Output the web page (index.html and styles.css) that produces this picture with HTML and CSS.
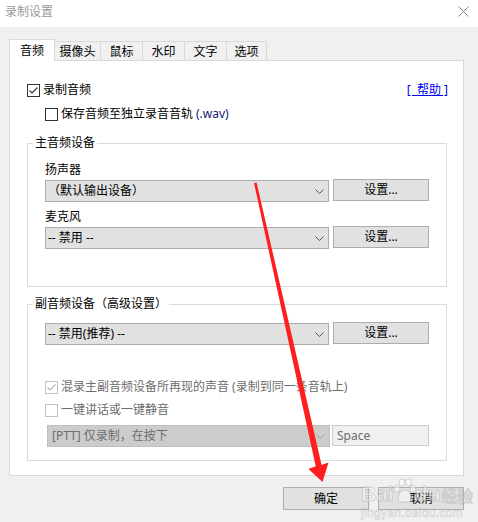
FILE: index.html
```html
<!DOCTYPE html>
<html lang="zh-CN">
<head>
<meta charset="utf-8">
<title>录制设置</title>
<link rel="stylesheet" href="styles.css">
</head>
<body>
<div class="titlebar">
  <span class="title">录制设置</span>
  <svg class="close" width="11" height="11" viewBox="0 0 11 11"><path d="M0.5 0.5 L10.5 10.5 M10.5 0.5 L0.5 10.5" stroke="#8a8a8a" stroke-width="1" fill="none"/></svg>
</div>
<div class="main">
  <div class="tabs">
    <div class="tab active w46">音频</div>
    <div class="tab w47">摄像头</div>
    <div class="tab w43">鼠标</div>
    <div class="tab w43">水印</div>
    <div class="tab w43">文字</div>
    <div class="tab w41">选项</div>
  </div>
  <div class="panel">
    <div class="row row-top">
      <label class="check"><span class="box"><svg width="11" height="11" viewBox="0 0 11 11"><path d="M1.5 5.5 L4 8 L9.5 2.5" stroke="#333" stroke-width="1.1" fill="none"/></svg></span>录制音频</label>
      <a class="help">[&nbsp;&nbsp;帮助&nbsp;]</a>
    </div>
    <div class="row row-sub">
      <label class="check"><span class="box"></span>保存音频至独立录音音轨 <span class="latin">(.wav)</span></label>
    </div>
    <fieldset class="group g1">
      <legend>主音频设备</legend>
      <div class="group-body">
        <div class="field-label first">扬声器</div>
        <div class="combo-row">
          <div class="select"><span>（默认输出设备）</span><svg class="chev" width="9" height="5" viewBox="0 0 9 5"><path d="M0.5 0.5 L4.5 4.5 L8.5 0.5" stroke="#555" fill="none"/></svg></div>
          <button class="btn setbtn">设置...</button>
        </div>
        <div class="field-label">麦克风</div>
        <div class="combo-row">
          <div class="select"><span>-- 禁用 --</span><svg class="chev" width="9" height="5" viewBox="0 0 9 5"><path d="M0.5 0.5 L4.5 4.5 L8.5 0.5" stroke="#555" fill="none"/></svg></div>
          <button class="btn setbtn">设置...</button>
        </div>
      </div>
    </fieldset>
    <fieldset class="group g2">
      <legend>副音频设备（高级设置）</legend>
      <div class="group-body">
        <div class="combo-row first">
          <div class="select"><span>-- 禁用(推荐) --</span><svg class="chev" width="9" height="5" viewBox="0 0 9 5"><path d="M0.5 0.5 L4.5 4.5 L8.5 0.5" stroke="#555" fill="none"/></svg></div>
          <button class="btn setbtn">设置...</button>
        </div>
        <div class="row row-mix">
          <label class="check disabled"><span class="box"><svg width="11" height="11" viewBox="0 0 11 11"><path d="M1.5 5.5 L4 8 L9.5 2.5" stroke="#b5b5b5" stroke-width="1.1" fill="none"/></svg></span>混录主副音频设备所再现的声音 (录制到同一条音轨上)</label>
        </div>
        <div class="row row-ptt">
          <label class="check disabled"><span class="box"></span>一键讲话或一键静音</label>
        </div>
        <div class="ptt-row">
          <div class="select ptt"><span>[PTT] 仅录制，在按下</span><svg class="chev" width="9" height="5" viewBox="0 0 9 5"><path d="M0.5 0.5 L4.5 4.5 L8.5 0.5" stroke="#a0a0a0" fill="none"/></svg></div>
          <div class="keybox">Space</div>
        </div>
      </div>
    </fieldset>
  </div>
  <div class="actions">
    <button class="btn action">确定</button>
    <button class="btn action">取消</button>
  </div>
</div>
<svg class="arrow" width="478" height="522" viewBox="0 0 478 522">
  <polygon points="254,183 256.6,182.6 321.6,465 328.5,462.5 322.5,482 308.5,469 315.7,466.3" fill="#ff1e1e"/>
</svg>
<div class="watermark">
  <div class="wm-logo"><span>Bai</span><svg class="paw" width="24" height="26" viewBox="0 0 24 26"><g fill="rgba(255,255,255,0.5)" stroke="rgba(160,160,160,0.45)" stroke-width="1"><ellipse cx="4" cy="11" rx="3" ry="3.6"/><ellipse cx="9" cy="4.5" rx="3" ry="3.6"/><ellipse cx="15.5" cy="4.5" rx="3" ry="3.6"/><ellipse cx="20" cy="11" rx="3" ry="3.6"/><path d="M5 22 C5 15 9 12 12 12 C15 12 19 15 19 22 C19 25 15 24 12 24 C9 24 5 25 5 22 Z"/></g></svg><span>du</span><span class="wm-cn">经验</span></div>
  <div class="wm-url">jingyan.baidu.com</div>
</div>
</body>
</html>
```

FILE: styles.css
```css
html, body {
  margin: 0;
  padding: 0;
}
body {
  width: 478px;
  height: 522px;
  background: #f0f0f0;
  font-family: "Noto Sans", "Noto Sans CJK SC", sans-serif;
  font-size: 12px;
  line-height: 16px;
  color: #000;
  position: relative;
  overflow: hidden;
}

.titlebar {
  height: 27px;
  background: #fff;
  display: flex;
  align-items: center;
  justify-content: space-between;
  padding: 0 9px 0 5px;
  box-sizing: border-box;
}
.title {
  color: #9a9a9a;
  margin-top: -3px;
}
.close {
  margin-top: -5px;
}

.main {
  padding: 12px 14px 0 9px;
}

.tabs {
  display: flex;
  align-items: flex-end;
  height: 22px;
  margin-bottom: -1px;
  position: relative;
  z-index: 1;
}
.tab {
  height: 20px;
  box-sizing: border-box;
  border: 1px solid #d9d9d9;
  background: #f0f0f0;
  padding-top: 2px;
  margin-left: -1px;
  text-align: center;
}
.tab.active {
  height: 22px;
  margin-left: 0;
  background: #fff;
  border-bottom: none;
  padding-top: 3px;
}
.w46 { width: 46px; }
.w47 { width: 47px; }
.w43 { width: 43px; }
.w41 { width: 41px; }

.panel {
  width: 455px;
  box-sizing: border-box;
  background: #fff;
  border: 1px solid #d9d9d9;
  padding: 21px 16px 14px 17px;
}

.row {
  display: flex;
  align-items: center;
  height: 16px;
}
.row-top {
  justify-content: space-between;
}
.row-sub {
  margin-top: 8px;
  padding-left: 18px;
}
.check {
  display: flex;
  align-items: center;
  gap: 3px;
  white-space: nowrap;
}
.box {
  width: 13px;
  height: 13px;
  box-sizing: border-box;
  border: 1px solid #333;
  background: #fff;
  display: flex;
  align-items: center;
  justify-content: center;
}
.latin {
  color: #10206a;
}
.help {
  color: #0000ee;
  text-decoration: underline;
  margin-right: -1px;
  white-space: nowrap;
}

.group {
  margin: 0;
  padding: 0;
  width: 420px;
  box-sizing: border-box;
  border: 1px solid #dcdcdc;
  min-inline-size: 0;
}
.group legend {
  padding: 0 2px;
  margin-left: 5px;
  line-height: 16px;
}
.g1 {
  margin-top: 13px;
}
.g1 .group-body {
  padding: 0 17px 37px 17px;
}
.g2 {
  margin-top: 9px;
}
.g2 .group-body {
  padding: 0 17px 13px 17px;
}

.field-label {
  margin-top: 7px;
  height: 16px;
}
.field-label.first {
  margin-top: 11px;
}
.combo-row {
  display: flex;
  gap: 4px;
  margin-top: 2px;
  align-items: flex-start;
}
.combo-row.first {
  margin-top: 11px;
}
.select {
  width: 284px;
  height: 22px;
  box-sizing: border-box;
  border: 1px solid #adadad;
  background: #e1e1e1;
  display: flex;
  align-items: center;
  justify-content: space-between;
  padding: 0 4px 0 2px;
}
.chev {
  margin-top: 1px;
}
.btn {
  font-family: inherit;
  font-size: 12px;
  line-height: 16px;
  color: #000;
  background: #e1e1e1;
  border: 1px solid #adadad;
  border-radius: 0;
  padding: 0;
  margin: 0;
  box-sizing: border-box;
}
.setbtn {
  width: 96px;
  height: 22px;
  margin-top: -1px;
}

.row-mix {
  margin-top: 34px;
}
.row-ptt {
  margin-top: 7px;
}
.check.disabled {
  color: #6d6d6d;
}
.check.disabled .box {
  border-color: #c2c2c2;
}

.ptt-row {
  display: flex;
  gap: 2px;
  margin-top: 7px;
  margin-left: 2px;
}
.select.ptt {
  width: 283px;
  background: #cccccc;
  border-color: #bfbfbf;
  color: #6d6d6d;
  padding-left: 4px;
}
.keybox {
  width: 97px;
  height: 21px;
  box-sizing: border-box;
  border: 1px solid #cccccc;
  background: #f0f0f0;
  color: #6d6d6d;
  padding-left: 4px;
  line-height: 19px;
}

.actions {
  width: 455px;
  display: flex;
  justify-content: flex-end;
  gap: 9px;
  margin-top: 11px;
}
.action {
  width: 86px;
  height: 23px;
}

.arrow {
  position: absolute;
  left: 0;
  top: 0;
  pointer-events: none;
}

.watermark {
  position: absolute;
  left: 361px;
  top: 478px;
  pointer-events: none;
  color: rgba(255, 255, 255, 0.45);
  -webkit-text-stroke: 1px rgba(150, 150, 150, 0.38);
}
.wm-logo {
  display: flex;
  align-items: flex-end;
  font-family: "Liberation Sans", sans-serif;
  font-weight: bold;
  font-size: 21px;
  line-height: 24px;
}
.paw {
  margin: 0 -2px 2px -1px;
}
.wm-cn {
  font-family: "Noto Sans CJK SC", sans-serif;
  font-weight: normal;
  font-size: 16px;
  margin-left: 1px;
  line-height: 22px;
}
.wm-url {
  font-family: "Liberation Sans", sans-serif;
  font-size: 12px;
  line-height: 13px;
  margin-top: 1px;
  letter-spacing: 0.3px;
  -webkit-text-stroke: 0.6px rgba(150, 150, 150, 0.38);
}
```
